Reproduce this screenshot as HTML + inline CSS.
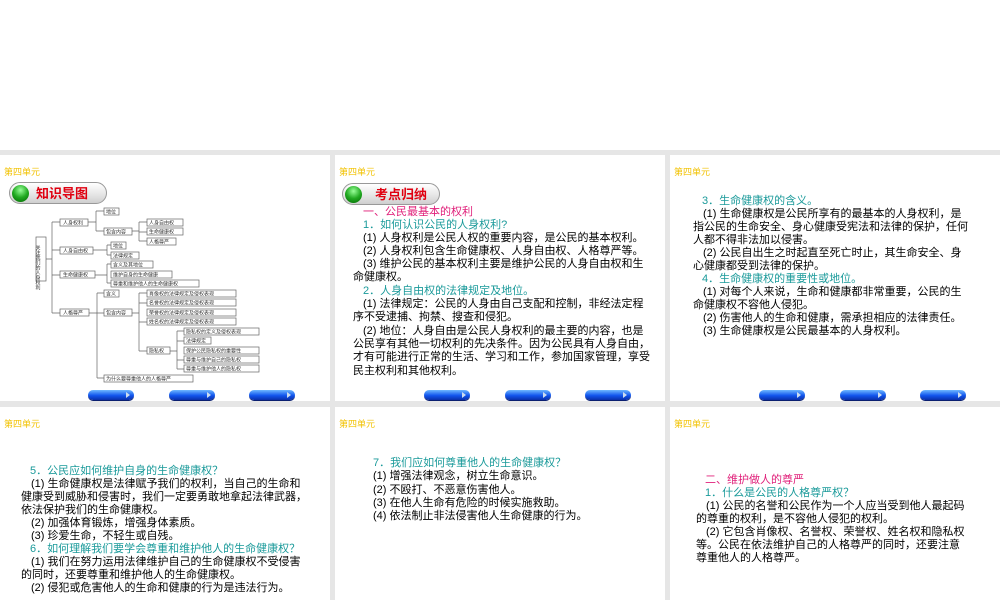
<!DOCTYPE html>
<html><head><meta charset="utf-8"><style>
*{margin:0;padding:0;box-sizing:border-box}
body{width:1000px;height:600px;background:#fff;position:relative;overflow:hidden;font-family:"Liberation Sans","Noto Sans CJK SC",sans-serif}
#bg{position:absolute;left:0;top:150px;width:1000px;height:450px;background:#e6e6e6}
.s{position:absolute;background:#fff;overflow:hidden}
.u{position:absolute;left:4px;top:11px;font-size:9px;color:#f2c200;font-family:"Noto Sans CJK SC",sans-serif;line-height:11px}
.l{position:absolute;white-space:nowrap;font-size:11px;line-height:13px;color:#000;font-family:"Liberation Sans","Noto Sans CJK SC",sans-serif}
.t{color:#1a9a9a}.m{color:#e0207a}
.b{position:absolute;width:46px;height:10px;border-radius:5px;background:linear-gradient(#6fb8ff,#1155ee 55%,#0a2fa8);box-shadow:0 1px 0 #0a1f70}
.b:after{content:"";position:absolute;right:4px;top:2px;border-left:4px solid #cde;border-top:3px solid transparent;border-bottom:3px solid transparent}
.p{position:absolute;width:98px;height:22px;border:1px solid #999;border-radius:11px;background:linear-gradient(#fff,#e4e4e4 60%,#cfcfcf)}
.p i{position:absolute;left:2px;top:2px;width:17px;height:17px;border-radius:50%;background:radial-gradient(circle at 50% 30%,#9f9,#2a2 50%,#060);}
.p span{position:absolute;top:2px;font-size:13px;font-weight:bold;color:#e00010;line-height:16px;font-family:"Noto Sans CJK SC",sans-serif}
</style></head><body>
<div id="bg"></div>

<!-- slide 1 -->
<div class="s" style="left:0;top:155px;width:330px;height:246px">
<div class="u">第四单元</div>
<div class="p" style="left:9px;top:27px"><i></i><span style="left:26px">知识导图</span></div>
<svg width="330" height="246" style="position:absolute;left:0;top:0" font-family="Noto Sans CJK SC" font-size="5" fill="#333">
<g stroke="#666" stroke-width="0.7" fill="#fff">
<rect x="36" y="82" width="10" height="44"/>
<rect x="60" y="64" width="28" height="7"/><rect x="60" y="92" width="33" height="7"/><rect x="60" y="116" width="35" height="7"/><rect x="60" y="154" width="29" height="7"/>
<rect x="104" y="53" width="15" height="7"/><rect x="104" y="73" width="28" height="7"/>
<rect x="147" y="64" width="36" height="7"/><rect x="147" y="73" width="36" height="7"/><rect x="147" y="83" width="29" height="7"/>
<rect x="111" y="87" width="15" height="7"/><rect x="111" y="97" width="28" height="7"/>
<rect x="111" y="106" width="42" height="7"/><rect x="111" y="116" width="61" height="7"/><rect x="111" y="125" width="88" height="7"/>
<rect x="104" y="135" width="15" height="7"/><rect x="104" y="154" width="28" height="7"/><rect x="104" y="220" width="89" height="7"/>
<rect x="147" y="135" width="89" height="7"/><rect x="147" y="144" width="89" height="7"/><rect x="147" y="154" width="89" height="7"/><rect x="147" y="163" width="89" height="7"/><rect x="147" y="192" width="23" height="7"/>
<rect x="184" y="173" width="75" height="7"/><rect x="184" y="182" width="27" height="7"/><rect x="184" y="192" width="75" height="7"/><rect x="184" y="201" width="75" height="7"/><rect x="184" y="210" width="75" height="7"/>
</g>
<g stroke="#666" stroke-width="0.7" fill="none">
<path d="M46 104H52M52 67V158M52 67H60M52 95H60M52 120H60M52 158H60"/>
<path d="M88 67H96M96 56V76M96 56H104M96 76H104M132 76H139M139 67V86M139 67H147M139 77H147M139 86H147"/>
<path d="M93 95H107M107 90V100M107 90H111M107 100H111"/>
<path d="M95 120H107M107 109V128M107 109H111M107 128H111"/>
<path d="M89 158H97M97 138V223M97 138H104M97 158H104M97 223H104"/>
<path d="M132 158H139M139 138V196M139 138H147M139 148H147M139 167H147M139 196H147"/>
<path d="M170 196H177M177 176V214M177 176H184M177 186H184M177 205H184M177 214H184"/>
</g>
<text x="38" y="90" font-size="5" writing-mode="tb">关注我们的人身权利</text>
<text x="63" y="69.5">人身权利</text><text x="63" y="97.5">人身自由权</text><text x="63" y="121.5">生命健康权</text><text x="63" y="159.5">人格尊严</text>
<text x="106" y="58.5">地位</text><text x="106" y="78.5">包含内容</text>
<text x="149" y="69.5">人身自由权</text><text x="149" y="78.5">生命健康权</text><text x="149" y="88.5">人格尊严</text>
<text x="113" y="92.5">地位</text><text x="113" y="102.5">法律规定</text>
<text x="113" y="111.5">含义及其地位</text><text x="113" y="121.5">维护自身的生命健康</text><text x="113" y="130.5">尊重和维护他人的生命健康权</text>
<text x="106" y="140.5">含义</text><text x="106" y="159.5">包含内容</text><text x="106" y="225.5">为什么要尊重他人的人格尊严</text>
<text x="149" y="140.5">肖像权的法律规定及侵权表现</text><text x="149" y="149.5">名誉权的法律规定及侵权表现</text><text x="149" y="159.5">荣誉权的法律规定及侵权表现</text><text x="149" y="168.5">姓名权的法律规定及侵权表现</text><text x="149" y="197.5">隐私权</text>
<text x="186" y="178.5">隐私权的定义及侵权表现</text><text x="186" y="187.5">法律规定</text><text x="186" y="197.5">保护公民隐私权的重要性</text><text x="186" y="206.5">尊重与维护自己的隐私权</text><text x="186" y="215.5">尊重与维护他人的隐私权</text>
</svg>
<div class="b" style="left:88px;top:235px"></div><div class="b" style="left:169px;top:235px"></div><div class="b" style="left:249px;top:235px"></div>
</div>

<!-- slide 2 -->
<div class="s" style="left:335px;top:155px;width:330px;height:246px">
<div class="u">第四单元</div>
<div class="p" style="left:7px;top:28px"><i></i><span style="left:32px">考点归纳</span></div>
<div class="l m" style="left:28px;top:51px">一、公民最基本的权利</div>
<div class="l t" style="left:28px;top:64px">1．如何认识公民的人身权利?</div>
<div class="l" style="left:28px;top:77px">(1) 人身权利是公民人权的重要内容，是公民的基本权利。</div>
<div class="l" style="left:28px;top:90px">(2) 人身权利包含生命健康权、人身自由权、人格尊严等。</div>
<div class="l" style="left:28px;top:103px">(3) 维护公民的基本权利主要是维护公民的人身自由权和生</div>
<div class="l" style="left:18px;top:116px">命健康权。</div>
<div class="l t" style="left:28px;top:130px">2．人身自由权的法律规定及地位。</div>
<div class="l" style="left:28px;top:143px">(1) 法律规定：公民的人身由自己支配和控制，非经法定程</div>
<div class="l" style="left:18px;top:156px">序不受逮捕、拘禁、搜查和侵犯。</div>
<div class="l" style="left:28px;top:170px">(2) 地位：人身自由是公民人身权利的最主要的内容，也是</div>
<div class="l" style="left:18px;top:183px">公民享有其他一切权利的先决条件。因为公民具有人身自由，</div>
<div class="l" style="left:18px;top:196px">才有可能进行正常的生活、学习和工作，参加国家管理，享受</div>
<div class="l" style="left:18px;top:210px">民主权利和其他权利。</div>
<div class="b" style="left:89px;top:235px"></div><div class="b" style="left:170px;top:235px"></div><div class="b" style="left:250px;top:235px"></div>
</div>

<!-- slide 3 -->
<div class="s" style="left:670px;top:155px;width:330px;height:246px">
<div class="u">第四单元</div>
<div class="l t" style="left:32px;top:40px">3．生命健康权的含义。</div>
<div class="l" style="left:33px;top:53px">(1) 生命健康权是公民所享有的最基本的人身权利，是</div>
<div class="l" style="left:23px;top:66px">指公民的生命安全、身心健康受宪法和法律的保护，任何</div>
<div class="l" style="left:23px;top:79px">人都不得非法加以侵害。</div>
<div class="l" style="left:33px;top:92px">(2) 公民自出生之时起直至死亡时止，其生命安全、身</div>
<div class="l" style="left:23px;top:105px">心健康都受到法律的保护。</div>
<div class="l t" style="left:32px;top:118px">4．生命健康权的重要性或地位。</div>
<div class="l" style="left:33px;top:131px">(1) 对每个人来说，生命和健康都非常重要，公民的生</div>
<div class="l" style="left:23px;top:144px">命健康权不容他人侵犯。</div>
<div class="l" style="left:33px;top:157px">(2) 伤害他人的生命和健康，需承担相应的法律责任。</div>
<div class="l" style="left:33px;top:170px">(3) 生命健康权是公民最基本的人身权利。</div>
<div class="b" style="left:89px;top:235px"></div><div class="b" style="left:170px;top:235px"></div><div class="b" style="left:250px;top:235px"></div>
</div>

<!-- slide 4 -->
<div class="s" style="left:0;top:407px;width:330px;height:193px">
<div class="u">第四单元</div>
<div class="l t" style="left:30px;top:58px">5．公民应如何维护自身的生命健康权？</div>
<div class="l" style="left:31px;top:71px">(1) 生命健康权是法律赋予我们的权利，当自己的生命和</div>
<div class="l" style="left:21px;top:84px">健康受到威胁和侵害时，我们一定要勇敢地拿起法律武器，</div>
<div class="l" style="left:21px;top:97px">依法保护我们的生命健康权。</div>
<div class="l" style="left:31px;top:110px">(2) 加强体育锻炼，增强身体素质。</div>
<div class="l" style="left:31px;top:123px">(3) 珍爱生命，不轻生或自残。</div>
<div class="l t" style="left:30px;top:136px">6．如何理解我们要学会尊重和维护他人的生命健康权？</div>
<div class="l" style="left:31px;top:149px">(1) 我们在努力运用法律维护自己的生命健康权不受侵害</div>
<div class="l" style="left:21px;top:162px">的同时，还要尊重和维护他人的生命健康权。</div>
<div class="l" style="left:31px;top:175px">(2) 侵犯或危害他人的生命和健康的行为是违法行为。</div>
</div>

<!-- slide 5 -->
<div class="s" style="left:335px;top:407px;width:330px;height:193px">
<div class="u">第四单元</div>
<div class="l t" style="left:38px;top:50px">7．我们应如何尊重他人的生命健康权？</div>
<div class="l" style="left:38px;top:63px">(1) 增强法律观念，树立生命意识。</div>
<div class="l" style="left:38px;top:77px">(2) 不殴打、不恶意伤害他人。</div>
<div class="l" style="left:38px;top:90px">(3) 在他人生命有危险的时候实施救助。</div>
<div class="l" style="left:38px;top:103px">(4) 依法制止非法侵害他人生命健康的行为。</div>
</div>

<!-- slide 6 -->
<div class="s" style="left:670px;top:407px;width:330px;height:193px">
<div class="u">第四单元</div>
<div class="l m" style="left:35px;top:67px">二、维护做人的尊严</div>
<div class="l t" style="left:35px;top:80px">1．什么是公民的人格尊严权？</div>
<div class="l" style="left:36px;top:93px">(1) 公民的名誉和公民作为一个人应当受到他人最起码</div>
<div class="l" style="left:26px;top:106px">的尊重的权利，是不容他人侵犯的权利。</div>
<div class="l" style="left:36px;top:119px">(2) 它包含肖像权、名誉权、荣誉权、姓名权和隐私权</div>
<div class="l" style="left:26px;top:132px">等。公民在依法维护自己的人格尊严的同时，还要注意</div>
<div class="l" style="left:26px;top:145px">尊重他人的人格尊严。</div>
</div>
</body></html>
